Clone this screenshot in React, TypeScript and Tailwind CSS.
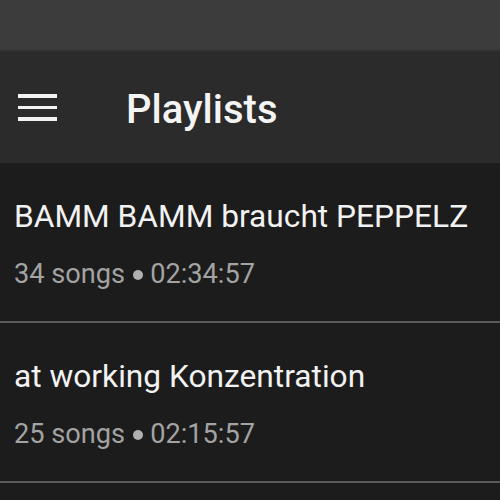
import React from "react";

const items = [
  { title: "BAMM BAMM braucht PEPPELZ", count: "34 songs", dur: "02:34:57" },
  { title: "at working Konzentration", count: "25 songs", dur: "02:15:57" },
];

export default function App() {
  return (
    <div className="w-[500px] h-[500px] overflow-hidden bg-[#1c1c1c] flex flex-col" style={{ fontFamily: "Roboto, 'Noto Sans', sans-serif" }}>
      <div className="h-[49px] shrink-0 bg-[#3c3c3c]" />
      <div className="h-[2px] shrink-0 bg-[#353535]" />
      <div className="h-[112px] shrink-0 bg-[#2b2b2b] flex items-center">
        <div className="w-[39px] ml-[18px] flex flex-col gap-[8px] mt-[1px]">
          <div className="h-[3.5px] bg-[#f2f2f2]" />
          <div className="h-[3.5px] bg-[#f2f2f2]" />
          <div className="h-[3.5px] bg-[#f2f2f2]" />
        </div>
        <div className="ml-[69px] text-[40px] leading-[48px] font-medium text-[#f4f4f4] mt-[5px]">Playlists</div>
      </div>
      {items.map((it) => (
        <div key={it.title} className="shrink-0">
          <div className="pl-[14px] pt-[34px] pb-[31px]">
            <div className="text-[31.7px] leading-[40px] text-[#f2f2f2] whitespace-nowrap">{it.title}</div>
            <div className="mt-[21px] text-[27.2px] leading-[32px] text-[#a3a3a3] flex items-center whitespace-nowrap">
              <span>{it.count}</span>
              <span className="w-[10px] h-[10px] rounded-full bg-[#b0b0b0] ml-[8px] mr-[7px] mt-[2px]" />
              <span>{it.dur}</span>
            </div>
          </div>
          <div className="h-[2px] bg-[#5a5a5a]" />
        </div>
      ))}
    </div>
  );
}
